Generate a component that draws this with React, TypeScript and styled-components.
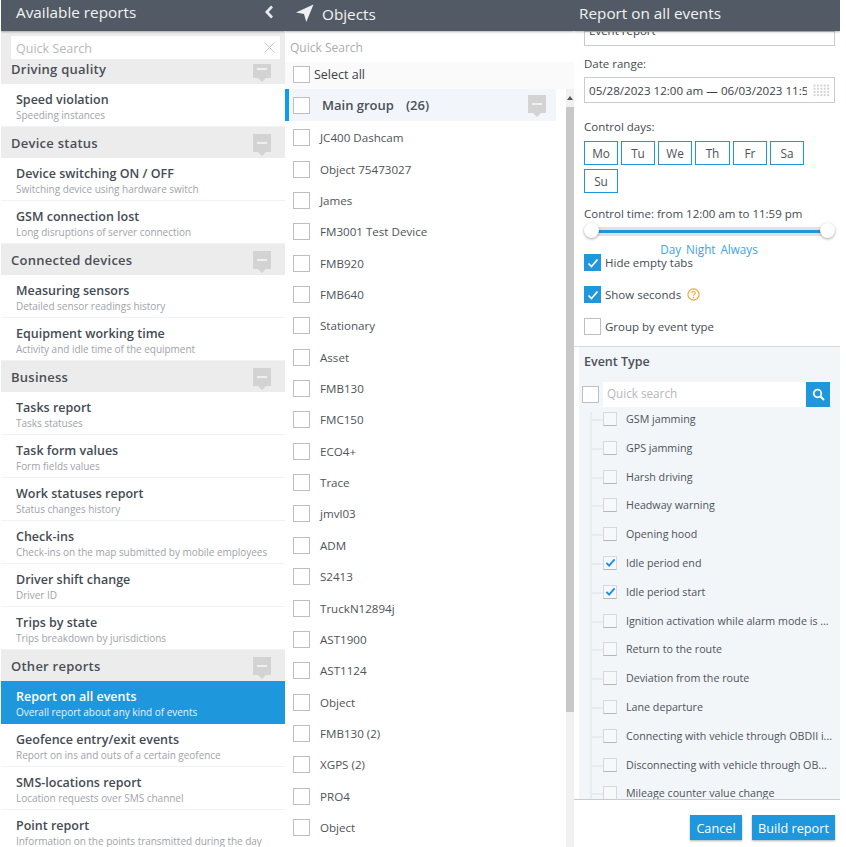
import React from "react";
import styled, { createGlobalStyle } from "styled-components";

const Global = createGlobalStyle`
  html, body { margin: 0; padding: 0; background: #fff; }
  * { box-sizing: border-box; }
  body { font-family: "Open Sans", "Liberation Sans", sans-serif; color: #444b54; overflow: hidden; }
`;

const Page = styled.div`
  display: grid;
  grid-template-columns: 284px 289px 266px;
  margin-left: 1px;
  width: 839px;
  height: 847px;
  overflow: hidden;
`;
const Column = styled.section`
  display: flex;
  flex-direction: column;
  height: 847px;
  min-width: 0;
  overflow: hidden;
  position: relative;
`;
const Header = styled.header<{ $pad: number; $top: number }>`
  flex: none;
  height: 31px;
  background: #525b65;
  color: #f1f3f4;
  font-size: 15.3px;
  line-height: 24px;
  display: flex;
  align-items: flex-start;
  padding: ${(p) => p.$top}px 0 0 ${(p) => p.$pad}px;
  gap: 8px;
  box-shadow: 0 1px 2px rgba(0, 0, 0, 0.3);
  position: relative;
  z-index: 3;
`;
const BackIcon = styled.svg`
  margin-left: auto;
  margin-right: 11px;
  margin-top: 5px;
`;
const ArrowIcon = styled.svg`
  margin-top: 2px;
`;
const SearchBar = styled.div`
  flex: none;
  height: 33px;
  background: #ececec;
  padding: 5px 5px 4px 10px;
  position: relative;
  z-index: 2;
`;
const SearchBox = styled.div`
  height: 23px;
  background: #fff;
  color: #b4b8bd;
  font-size: 12.5px;
  line-height: 26px;
  padding-left: 5px;
  display: flex;
  justify-content: space-between;
`;
const CloseIcon = styled.svg`
  margin: 6px 5px 0 0;
`;
const ReportList = styled.div`
  margin-top: -11px;
  flex: 1;
  min-height: 0;
  overflow: hidden;
`;
const GroupRow = styled.div`
  height: 31px;
  background: #ececec;
  display: flex;
  justify-content: space-between;
  padding: 6px 14px 0 10px;
  font-size: 13px;
  font-weight: 600;
  line-height: 20px;
  letter-spacing: 0.25px;
  color: #4a4f55;
`;
const Collapse = styled.div`
  width: 18px;
  height: 18px;
  margin-top: 1px;
  background: #d3d3d3;
  position: relative;
  flex: none;
  &::before {
    content: "";
    position: absolute;
    left: 4px;
    right: 4px;
    top: 8px;
    height: 2px;
    background: #f0f0f0;
  }
  &::after {
    content: "";
    position: absolute;
    left: 5px;
    bottom: -4px;
    border: 4px solid transparent;
    border-bottom: 0;
    border-top-color: #d3d3d3;
  }
`;
const ReportItem = styled.div<{ $active?: boolean }>`
  height: 43px;
  padding: 7px 10px 0 15px;
  background: ${(p) => (p.$active ? "#1f97dd" : "#fff")};
  border-bottom: 1px solid ${(p) => (p.$active ? "#1f97dd" : "#f2f2f2")};
  overflow: hidden;
`;
const ItemTitle = styled.div<{ $active?: boolean }>`
  font-size: 12.5px;
  font-weight: 600;
  line-height: 18px;
  white-space: nowrap;
  color: ${(p) => (p.$active ? "#fff" : "#444b54")};
`;
const ItemSub = styled.div<{ $active?: boolean }>`
  font-size: 10px;
  font-weight: 400;
  line-height: 13px;
  white-space: nowrap;
  letter-spacing: -0.03px;
  color: ${(p) => (p.$active ? "#e7f3fb" : "#a0a3ab")};
`;
const ObjectSearch = styled.div`
  flex: none;
  height: 31px;
  color: #a9adb2;
  font-size: 12px;
  line-height: 33px;
  padding-left: 5px;
`;
const SelectAll = styled.div`
  flex: none;
  height: 27px;
  background: #fafafa;
  display: flex;
  align-items: center;
  gap: 4px;
  padding: 0 0 2px 8px;
  font-size: 12.5px;
  color: #3c4248;
`;
const ObjectsBody = styled.div`
  flex: 1;
  min-height: 0;
  display: grid;
  grid-template-columns: 281px 8px;
`;
const ObjectRows = styled.div`
  overflow: hidden;
  min-width: 0;
`;
const MainGroup = styled.div`
  height: 32px;
  width: 271px;
  background: #f2f5f9;
  border-left: 4px solid #0b9cf5;
  display: flex;
  align-items: center;
  padding-left: 4px;
  font-size: 13px;
  font-weight: 600;
  color: #4a515a;
  margin-bottom: 1px;
`;
const MainLabel = styled.span`
  margin-left: 12px;
  flex: 1;
  display: flex;
  gap: 12px;
`;
const MainCollapse = styled(Collapse)`
  margin: -2px 10px 0 0;
`;
const ObjectRow = styled.div`
  height: 31.36px;
  display: flex;
  align-items: center;
  padding-left: 8px;
  gap: 10px;
  font-size: 11.6px;
  color: #4e545b;
`;
const Box = styled.span<{ $checked?: boolean }>`
  flex: none;
  display: inline-flex;
  align-items: center;
  justify-content: center;
  width: 17px;
  height: 17px;
  background: ${(p) => (p.$checked ? "#1f97dd" : "#fff")};
  border: 1px solid ${(p) => (p.$checked ? "#1f97dd" : "#bcbfc4")};
`;
const ScrollTrack = styled.div`
  background: #f1f1f1;
  display: flex;
  flex-direction: column;
`;
const ScrollArrow = styled.div`
  height: 18px;
  display: flex;
  align-items: center;
  justify-content: center;
`;
const ScrollThumb = styled.div`
  height: 605px;
  background: #c8c8c8;
`;
const FormArea = styled.div`
  flex: none;
  height: 315px;
  padding: 0 5px 0 10px;
  background: #fff;
  font-size: 11.5px;
  color: #444b54;
`;
const Field = styled.div<{ $h: number; $top?: number }>`
  height: ${(p) => p.$h}px;
  margin-top: ${(p) => p.$top ?? 0}px;
  border: 1px solid #c9cccf;
  display: flex;
  align-items: center;
  justify-content: space-between;
  padding: 0 4px;
  overflow: hidden;
  white-space: nowrap;
`;
const ClippedField = styled(Field)`
  align-items: flex-end;
  padding-bottom: 6px;
`;
const ClippedValue = styled.span`
  line-height: 16px;
  font-size: 11.5px;
  color: #3c4248;
`;
const DateText = styled.span`
  font-size: 11.6px;
  color: #3c4248;
  overflow: hidden;
  width: 218px;
`;
const Label = styled.div<{ $top: number }>`
  margin-top: ${(p) => p.$top}px;
  line-height: 16px;
  white-space: nowrap;
`;
const Days = styled.div`
  display: flex;
  flex-wrap: wrap;
  gap: 4px 3px;
  margin-top: 6px;
`;
const Day = styled.div<{ $wide?: boolean }>`
  width: ${(p) => (p.$wide ? 35 : 34)}px;
  height: 24px;
  border: 1px solid #1f97dd;
  text-align: center;
  line-height: 23px;
  font-size: 11.8px;
  color: #4a515a;
`;
const Slider = styled.div`
  margin-top: -1px;
  height: 20px;
  position: relative;
  display: flex;
  align-items: center;
  padding: 0 8px;
`;
const SliderTrack = styled.div`
  height: 9px;
  width: 100%;
  background: #dfe1e4;
  display: flex;
  align-items: center;
`;
const SliderFill = styled.div`
  height: 3px;
  width: 100%;
  background: #1f97dd;
`;
const Handle = styled.span<{ $side: "left" | "right" }>`
  position: absolute;
  ${(p) => p.$side}: 0;
  top: 2px;
  width: 15px;
  height: 15px;
  border-radius: 50%;
  background: #fff;
  box-shadow: 0 1px 3px rgba(0, 0, 0, 0.35);
`;
const Links = styled.div`
  display: flex;
  justify-content: center;
  gap: 5px;
  color: #3ea4e2;
  font-size: 11.7px;
  line-height: 14px;
  margin-top: 1px;
  padding-right: 1px;
`;
const Check = styled.div<{ $top: number }>`
  display: flex;
  align-items: center;
  gap: 4px;
  height: 17px;
  margin-top: ${(p) => p.$top}px;
  line-height: 17px;
  white-space: nowrap;
`;
const HelpIcon = styled.svg`
  margin-left: 2px;
`;
const EventPanel = styled.div`
  flex: 1;
  min-height: 0;
  background: #fff;
  display: flex;
  flex-direction: column;
  border-top: 1px solid #d6d8da;
`;
const EventBody = styled.div`
  flex: 1;
  min-height: 0;
  margin-left: 5px;
  background: #f3f6f9;
  display: flex;
  flex-direction: column;
`;
const EventHead = styled.div`
  flex: none;
  height: 30px;
  padding: 5px 0 0 5px;
  font-size: 12.5px;
  line-height: 20px;
  font-weight: 600;
  color: #4a515a;
`;
const EventSearch = styled.div`
  flex: none;
  height: 35px;
  padding: 5px 10px 0 3px;
  display: flex;
  gap: 4px;
`;
const EventSearchBox = styled(Box)`
  margin-top: 4px;
`;
const EventInput = styled.div`
  flex: 1;
  height: 25px;
  background: #fff;
  color: #b4b8bd;
  font-size: 11.7px;
  line-height: 23px;
  padding-left: 4px;
`;
const SearchBtn = styled.div`
  width: 24px;
  height: 25px;
  margin-left: -4px;
  background: #1f97dd;
  display: flex;
  align-items: center;
  justify-content: center;
`;
const EventList = styled.div`
  flex: 1;
  min-height: 0;
  overflow: hidden;
  position: relative;
  padding-left: 24px;
  &::before {
    content: "";
    position: absolute;
    left: 11px;
    top: 0;
    bottom: 0;
    width: 2px;
    background: #e8ebef;
  }
`;
const EventRows = styled.div`
  margin-top: -7.4px;
`;
const EventRow = styled.div`
  height: 28.8px;
  display: flex;
  align-items: center;
  gap: 9px;
  font-size: 10.7px;
  color: #4e545b;
  position: relative;
  white-space: nowrap;
  &::before {
    content: "";
    position: absolute;
    left: -12px;
    width: 12px;
    top: 50%;
    height: 2px;
    background: #e8ebef;
  }
`;
const EventBox = styled.span`
  flex: none;
  width: 14px;
  height: 14px;
  display: flex;
  align-items: center;
  justify-content: center;
  background: #f6f8fa;
  border: 1px solid #d5d8dc;
  border-bottom-color: #b4b7bc;
`;
const Footer = styled.footer`
  flex: none;
  height: 48px;
  border-top: 1px solid #c9cccf;
  background: #fff;
  display: flex;
  justify-content: flex-end;
  gap: 10px;
  padding: 15px 5px 0 0;
`;
const Button = styled.button<{ $w: number }>`
  width: ${(p) => p.$w}px;
  height: 25px;
  border: 0;
  padding: 0;
  background: #1f97dd;
  color: #fff;
  font-family: inherit;
  font-size: 12.7px;
  box-shadow: 0 1px 2px rgba(0, 0, 0, 0.3);
`;
const CalendarIcon = styled.svg`
  flex: none;
`;

const Tick = ({ size = 12, color = "#fff", weight = 1.7 }: { size?: number; color?: string; weight?: number }) => (
  <svg width={size} height={size} viewBox="0 0 12 12" fill="none">
    <path d="M1.5 6.5 4.5 9.5 10.5 2.5" stroke={color} strokeWidth={weight} />
  </svg>
);

type Entry = { group: string } | { title: string; sub: string; active?: boolean };
const reports: Entry[] = [
  { group: "Driving quality" },
  { title: "Speed violation", sub: "Speeding instances" },
  { group: "Device status" },
  { title: "Device switching ON / OFF", sub: "Switching device using hardware switch" },
  { title: "GSM connection lost", sub: "Long disruptions of server connection" },
  { group: "Connected devices" },
  { title: "Measuring sensors", sub: "Detailed sensor readings history" },
  { title: "Equipment working time", sub: "Activity and idle time of the equipment" },
  { group: "Business" },
  { title: "Tasks report", sub: "Tasks statuses" },
  { title: "Task form values", sub: "Form fields values" },
  { title: "Work statuses report", sub: "Status changes history" },
  { title: "Check-ins", sub: "Check-ins on the map submitted by mobile employees" },
  { title: "Driver shift change", sub: "Driver ID" },
  { title: "Trips by state", sub: "Trips breakdown by jurisdictions" },
  { group: "Other reports" },
  { title: "Report on all events", sub: "Overall report about any kind of events", active: true },
  { title: "Geofence entry/exit events", sub: "Report on ins and outs of a certain geofence" },
  { title: "SMS-locations report", sub: "Location requests over SMS channel" },
  { title: "Point report", sub: "Information on the points transmitted during the day" },
];
const objects = [
  "JC400 Dashcam", "Object 75473027", "James", "FM3001 Test Device", "FMB920", "FMB640", "Stationary",
  "Asset", "FMB130", "FMC150", "ECO4+", "Trace", "jmvl03", "ADM", "S2413", "TruckN12894j", "AST1900",
  "AST1124", "Object", "FMB130 (2)", "XGPS (2)", "PRO4", "Object",
];
const events: [string, boolean?][] = [
  ["GSM jamming"], ["GPS jamming"], ["Harsh driving"], ["Headway warning"], ["Opening hood"],
  ["Idle period end", true], ["Idle period start", true],
  ["Ignition activation while alarm mode is ..."], ["Return to the route"], ["Deviation from the route"],
  ["Lane departure"], ["Connecting with vehicle through OBDII i..."], ["Disconnecting with vehicle through OB..."],
  ["Mileage counter value change"],
];
const days = ["Mo", "Tu", "We", "Th", "Fr", "Sa", "Su"];

export default function App() {
  return (
    <Page>
      <Global />
      <Column>
        <Header $pad={15} $top={0}>
          Available reports
          <BackIcon width="10" height="14" viewBox="0 0 10 14" fill="none">
            <path d="M8 1.5 2.8 7 8 12.5" stroke="#e9ebed" strokeWidth="2.6" />
          </BackIcon>
        </Header>
        <SearchBar>
          <SearchBox>
            Quick Search
            <CloseIcon width="11" height="11" viewBox="0 0 11 11" fill="none">
              <path d="M.5.5l10 10M10.5.5l-10 10" stroke="#c4c7ca" />
            </CloseIcon>
          </SearchBox>
        </SearchBar>
        <ReportList>
          {reports.map((r) =>
            "group" in r ? (
              <GroupRow key={r.group}>
                {r.group}
                <Collapse />
              </GroupRow>
            ) : (
              <ReportItem key={r.title} $active={r.active}>
                <ItemTitle $active={r.active}>{r.title}</ItemTitle>
                <ItemSub $active={r.active}>{r.sub}</ItemSub>
              </ReportItem>
            )
          )}
        </ReportList>
      </Column>

      <Column>
        <Header $pad={11} $top={2}>
          <ArrowIcon width="18" height="18" viewBox="0 0 18 18">
            <path d="M17.5.5 0 8.5l8 1.6L10.3 18z" fill="#eef0f1" />
          </ArrowIcon>
          Objects
        </Header>
        <ObjectSearch>Quick Search</ObjectSearch>
        <SelectAll>
          <Box />
          Select all
        </SelectAll>
        <ObjectsBody>
          <ObjectRows>
            <MainGroup>
              <Box />
              <MainLabel>
                <span>Main group</span>
                <span>(26)</span>
              </MainLabel>
              <MainCollapse />
            </MainGroup>
            {objects.map((o, i) => (
              <ObjectRow key={o + i}>
                <Box />
                {o}
              </ObjectRow>
            ))}
          </ObjectRows>
          <ScrollTrack>
            <ScrollArrow>
              <svg width="6" height="4" viewBox="0 0 6 4">
                <path d="M3 0 6 4H0z" fill="#555" />
              </svg>
            </ScrollArrow>
            <ScrollThumb />
          </ScrollTrack>
        </ObjectsBody>
      </Column>

      <Column>
        <Header $pad={5} $top={1}>Report on all events</Header>
        <FormArea>
          <ClippedField $h={15}>
            <ClippedValue>Event report</ClippedValue>
          </ClippedField>
          <Label $top={10}>Date range:</Label>
          <Field $h={26} $top={5}>
            <DateText>05/28/2023 12:00 am — 06/03/2023 11:59 pm</DateText>
            <CalendarIcon width="17" height="13" viewBox="0 0 17 13">
              {Array.from({ length: 20 }, (_, i) => (
                <rect key={i} x={(i % 5) * 3.4 + 0.5} y={Math.floor(i / 5) * 3.2 + 0.5} width="2" height="2" fill="#d2d5d8" />
              ))}
            </CalendarIcon>
          </Field>
          <Label $top={16}>Control days:</Label>
          <Days>
            {days.map((d) => (
              <Day key={d} $wide={d === "Th"}>{d}</Day>
            ))}
          </Days>
          <Label $top={13}>Control time: from 12:00 am to 11:59 pm</Label>
          <Slider>
            <Handle $side="left" />
            <SliderTrack>
              <SliderFill />
            </SliderTrack>
            <Handle $side="right" />
          </Slider>
          <Links>
            <span>Day</span>
            <span>Night</span>
            <span>Always</span>
          </Links>
          <Check $top={-2}>
            <Box $checked><Tick /></Box>
            Hide empty tabs
          </Check>
          <Check $top={15}>
            <Box $checked><Tick /></Box>
            Show seconds
            <HelpIcon width="13" height="13" viewBox="0 0 13 13" fill="none">
              <circle cx="6.5" cy="6.5" r="5.6" stroke="#f0a030" strokeWidth="1.1" />
              <path d="M4.8 5.2c0-2.2 3.5-2.2 3.5-.1 0 1.3-1.7 1.3-1.7 2.7" stroke="#f0a030" strokeWidth="1.1" />
              <rect x="6" y="8.8" width="1.2" height="1.2" fill="#f0a030" />
            </HelpIcon>
          </Check>
          <Check $top={15}>
            <Box />
            Group by event type
          </Check>
        </FormArea>
        <EventPanel>
          <EventBody>
            <EventHead>Event Type</EventHead>
            <EventSearch>
              <EventSearchBox />
              <EventInput>Quick search</EventInput>
              <SearchBtn>
                <svg width="13" height="13" viewBox="0 0 13 13" fill="none">
                  <circle cx="5.5" cy="5.5" r="3.8" stroke="#fff" strokeWidth="1.8" />
                  <path d="M8.5 8.5 12 12" stroke="#fff" strokeWidth="2" />
                </svg>
              </SearchBtn>
            </EventSearch>
            <EventList>
              <EventRows>
                {events.map(([name, on]) => (
                  <EventRow key={name}>
                    <EventBox>{on && <Tick size={11} color="#1a8fe8" weight={2} />}</EventBox>
                    {name}
                  </EventRow>
                ))}
              </EventRows>
            </EventList>
          </EventBody>
          <Footer>
            <Button $w={52}>Cancel</Button>
            <Button $w={83}>Build report</Button>
          </Footer>
        </EventPanel>
      </Column>
    </Page>
  );
}
